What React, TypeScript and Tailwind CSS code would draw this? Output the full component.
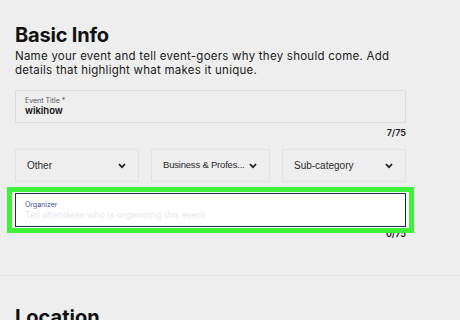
import React from "react";

const Chevron = () => (
  <svg width="8" height="6" viewBox="0 0 8 6" fill="none">
    <path d="M1 1.2l3 3 3-3" stroke="#222" strokeWidth="1.7" />
  </svg>
);

interface ISelect {
  label: string;
  className?: string;
  textClass?: string;
}

const SelectBox: React.FC<ISelect> = ({ label, className, textClass }) => {
  return (
    <div
      className={`flex h-[33px] items-center justify-between border border-[#e2e2e2] bg-[#eeeeee] pl-[11px] pr-[12px] text-[#2b2b2b] ${className}`}
      style={{ fontFamily: "'Liberation Sans', sans-serif" }}
    >
      <span className={`whitespace-nowrap ${textClass ?? "text-[10px]"}`}>{label}</span>
      <Chevron />
    </div>
  );
};

export default function App() {
  return (
    <div
      className="h-[320px] w-[460px] overflow-hidden bg-[#eeeeee] text-[#1e0a3c]"
      style={{ fontFamily: "Inter, 'Liberation Sans', sans-serif" }}
    >
      <div className="w-[406px] pl-[15px] pt-[23px]">
        <h1 className="text-[20px] font-bold leading-[25px] tracking-[-0.2px] text-[#111]">
          Basic Info
        </h1>
        <p className="mt-[1px] max-w-[380px] text-[11.5px] leading-[14px] tracking-[0.25px] text-[#1a1a1a]">
          Name your event and tell event-goers why they should come. Add
          details that highlight what makes it unique.
        </p>

        {/* event title */}
        <div className="mt-[13px] flex h-[33px] flex-col justify-center border border-[#dcdcdc] bg-[#eeeeee] pl-[9px]">
          <span className="text-[7px] leading-[9px] text-[#555]">Event Title *</span>
          <span className="text-[9.5px] font-semibold leading-[12px] text-[#111]">wikihow</span>
        </div>
        <div className="mt-[5px] text-right text-[9px] font-semibold leading-[10px] text-[#222]">
          7/75
        </div>

        {/* categories */}
        <div className="mt-[11px] flex gap-[12px]">
          <SelectBox label="Other" className="w-[124px]" />
          <SelectBox
            label="Business & Profes..."
            className="w-[119px] pr-[10px]"
            textClass="text-[9.5px] tracking-[-0.2px]"
          />
          <SelectBox label="Sub-category" className="w-[124px]" />
        </div>

        {/* organizer */}
        <div className="relative z-10 -mx-[8px] mt-[5px] border-[5px] border-[#3ef23a] bg-[#f7fff7] px-[3px] py-[1px]">
          <div className="flex h-[34px] flex-col justify-center border-[1.5px] border-[#1b2a55] bg-white pl-[9px]">
            <span className="text-[7px] leading-[9px] text-[#3a4fa0]">Organizer</span>
            <span className="text-[9px] leading-[12px] text-[#e6e8ee]">
              Tell attendees who is organizing this event
            </span>
          </div>
        </div>
        <div className="-mt-[4px] text-right text-[9px] font-semibold leading-[10px] text-[#222]">
          0/75
        </div>
      </div>

      <div className="mt-[36px] border-t border-[#e4e4e4]" />

      <div className="pl-[15px] pt-[29px]">
        <h2 className="text-[20px] font-bold leading-[25px] text-[#111]">Location</h2>
      </div>
    </div>
  );
}
